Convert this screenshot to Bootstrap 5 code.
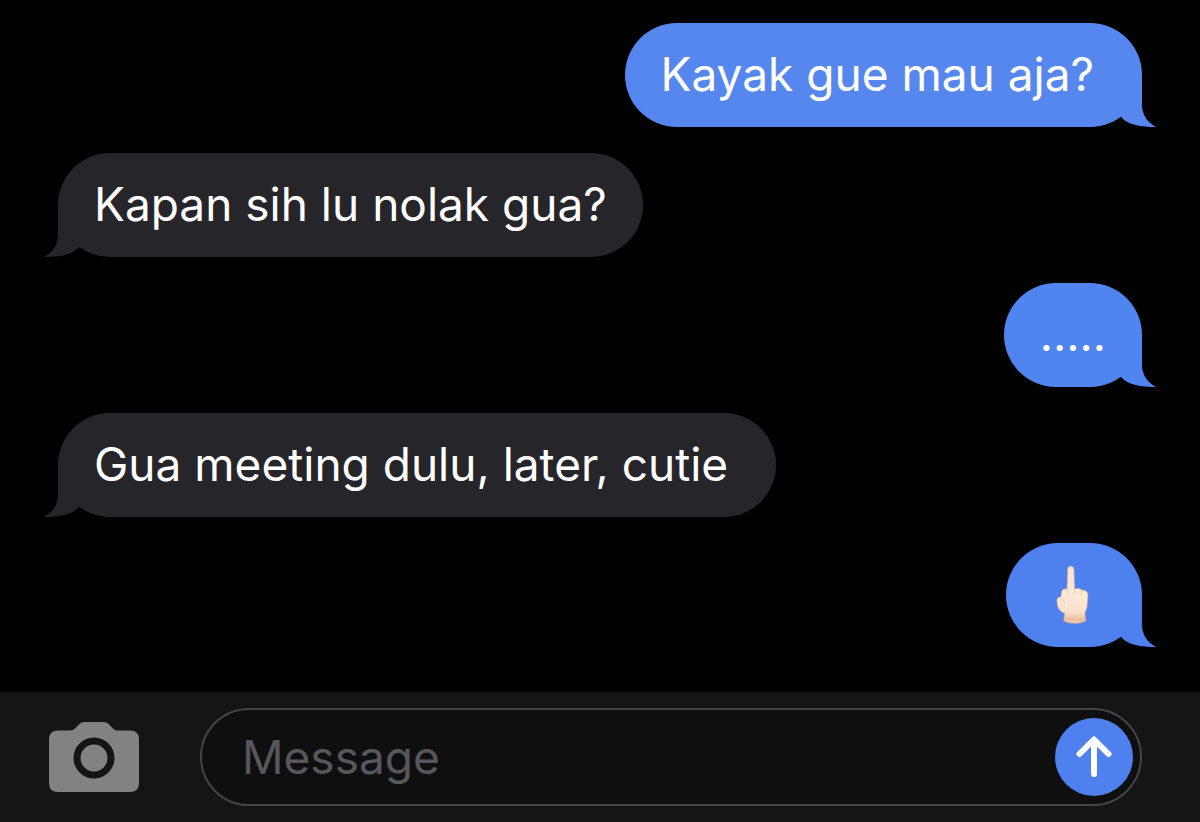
<!DOCTYPE html>
<html lang="id">
<head>
<meta charset="utf-8">
<meta name="viewport" content="width=device-width, initial-scale=1">
<title>Messages</title>
<link href="https://cdn.jsdelivr.net/npm/bootstrap@5.3.0/dist/css/bootstrap.min.css" rel="stylesheet">
<style>
  body { background: #000; font-family: Inter, "Liberation Sans", sans-serif; font-size: 46px; line-height: 60px; color: #fff; }
  .thread { padding: 23px 58px 40px; gap: 26px; }
  .bubble { padding: 21px 36px 23px; min-height: 104px; border-radius: 52px; background: var(--fill); }
  .roomy { padding-right: 48px; }
  .received { --fill: #26252a; }
  .sent { --fill: #5085ef; }
  .sent.first { --fill: #5587ee; }
  .sent.latest { --fill: #4e81ee; }
  .tail { right: -14px; bottom: 0; fill: var(--fill); }
  .received .tail { right: auto; left: -14px; transform: scaleX(-1); }
  .emoji { width: 64px; height: 60px; }
  .composer { background: #151515; padding: 16px 58px 16px 49px; gap: 61px; }
  .camera { color: #828282; }
  .field { background: #0f0f10; border: 2px solid #454548; height: 98px; padding: 0 7px 0 40px; }
  .field input { color: #fff; min-width: 0; outline: 0; }
  .field input::placeholder { color: #57575b; opacity: 1; }
  .send { width: 78px; height: 78px; background: #4e81ee; }
</style>
</head>
<body>
<svg class="d-none" aria-hidden="true">
  <symbol id="tail" viewBox="0 0 36 52"><path d="M0 0H22V30C22 40 28 48 36 52C21 52 8 50 1 42L0 41Z"/></symbol>
</svg>
<div class="d-flex flex-column min-vh-100">
  <main class="thread d-flex flex-column flex-grow-1">
    <div class="bubble sent first roomy position-relative align-self-end">Kayak gue mau aja?<svg class="tail position-absolute" width="36" height="52" aria-hidden="true"><use href="#tail"/></svg></div>
    <div class="bubble received position-relative align-self-start">Kapan sih lu nolak gua?<svg class="tail position-absolute" width="36" height="52" aria-hidden="true"><use href="#tail"/></svg></div>
    <div class="bubble sent position-relative align-self-end">.....<svg class="tail position-absolute" width="36" height="52" aria-hidden="true"><use href="#tail"/></svg></div>
    <div class="bubble received roomy position-relative align-self-start">Gua meeting dulu, later, cutie<svg class="tail position-absolute" width="36" height="52" aria-hidden="true"><use href="#tail"/></svg></div>
    <div class="bubble sent latest position-relative align-self-end">
      <svg class="emoji d-block" viewBox="0 0 64 60" role="img" aria-label="Middle finger">
        <defs>
          <linearGradient id="skin" x1="0" y1="0" x2="0" y2="1">
            <stop offset="0" stop-color="#f8e2d0"/><stop offset=".5" stop-color="#fde9d8"/><stop offset=".8" stop-color="#fae0cb"/><stop offset=".93" stop-color="#e8bfa2"/><stop offset="1" stop-color="#f3d3bc"/>
          </linearGradient>
        </defs>
        <path fill="url(#skin)" stroke="#b59a9c" stroke-width=".6" d="M25.500 5.500Q25.800 2 28.800 2Q31.800 2 32 5.500L32.800 25Q34.500 23.800 37 24.500Q38.800 24.800 39.600 26Q45.500 25.500 46 31L45.500 40Q45 45 43 49L44 57Q39 59.500 33 59.500Q26 59.500 21.500 57L22.500 49.500Q16.500 47 15.200 41L14.800 36Q15.200 32.500 18.800 33L19.500 27.500Q20.500 24.200 25 25Z"/>
        <path fill="none" stroke="#eccab0" stroke-width=".8" d="M26 25.500V31M32.600 25.500V31M39.400 26.500V32M19 33.500Q22 35 22.500 40"/>
      </svg>
      <svg class="tail position-absolute" width="36" height="52" aria-hidden="true"><use href="#tail"/></svg>
    </div>
  </main>
  <form class="composer d-flex align-items-center" onsubmit="return false">
    <button type="button" class="camera btn border-0 p-0 d-flex flex-shrink-0" aria-label="Camera">
      <svg width="90" height="70" viewBox="0 0 90 70" fill="currentColor" aria-hidden="true">
        <path fill-rule="evenodd" d="M9 8.500H22Q24 8.500 26 6.500L31 1.500Q32.500 0 35 0H55Q57.500 0 59 1.500L64 6.500Q66 8.500 68 8.500H81Q90 8.500 90 17.500V61Q90 70 81 70H9Q0 70 0 61V17.500Q0 8.500 9 8.500ZM45 15.500A20.500 20.500 0 1 0 45 56.500A20.500 20.500 0 1 0 45 15.500Z"/>
        <circle cx="45" cy="36" r="13.500"/>
      </svg>
    </button>
    <div class="field d-flex flex-grow-1 align-items-center rounded-pill">
      <input type="text" class="flex-grow-1 bg-transparent border-0 p-0" placeholder="Message" aria-label="Message">
      <button type="submit" class="send btn border-0 p-0 rounded-circle d-flex align-items-center justify-content-center flex-shrink-0" aria-label="Send">
        <svg width="36" height="42" viewBox="0 0 36 42" fill="none" stroke="#fff" stroke-width="6" stroke-linecap="round" stroke-linejoin="round" aria-hidden="true"><path d="M18 38V4M3.500 18L18 3.500L32.500 18"/></svg>
      </button>
    </div>
  </form>
</div>
<script src="https://cdn.jsdelivr.net/npm/bootstrap@5.3.0/dist/js/bootstrap.bundle.min.js"></script>
</body>
</html>
